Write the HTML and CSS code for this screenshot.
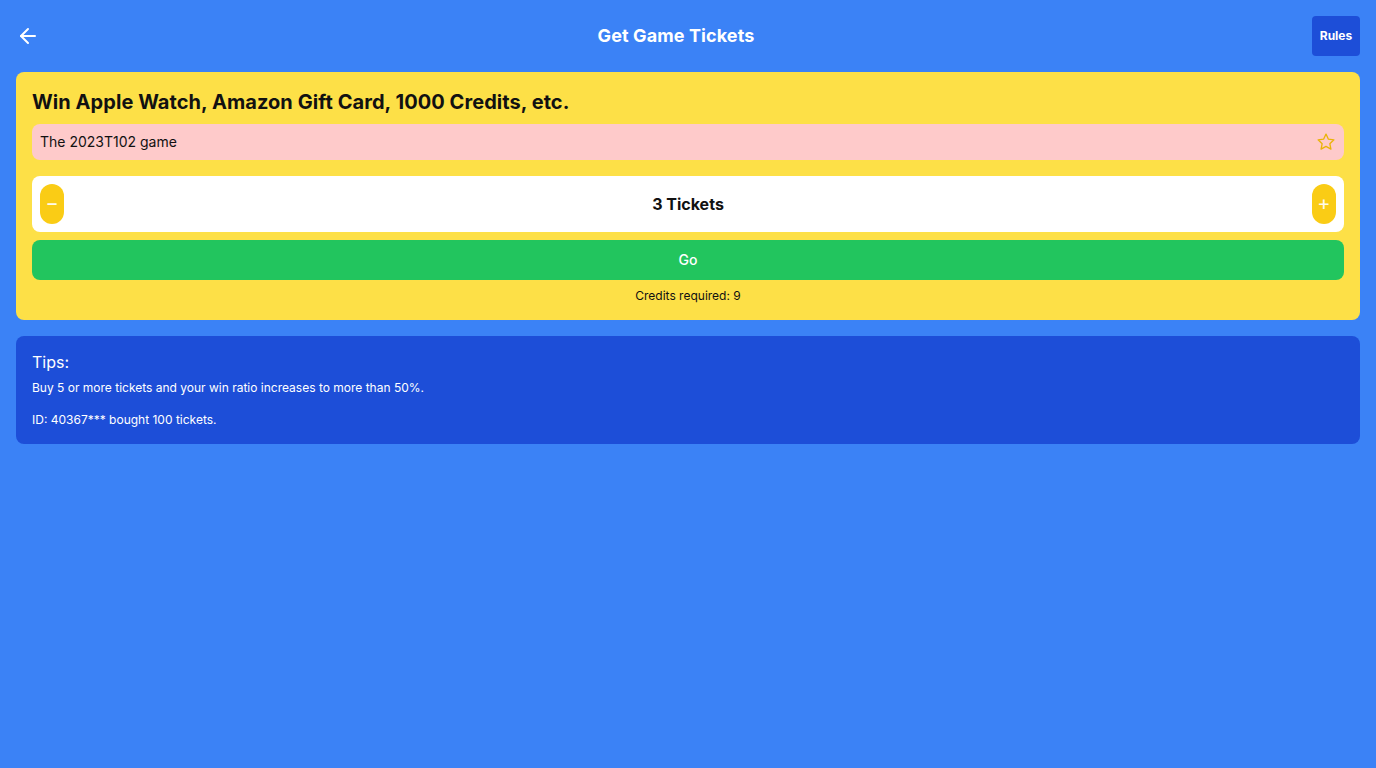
FILE: index.html
```html
<!DOCTYPE html>
<html>
<head>
<meta charset="utf-8">
<link rel="stylesheet" href="styles.css">
</head>
<body>
<header class="topbar">
  <button class="back" aria-label="Back">
    <svg width="24" height="24" viewBox="0 0 24 24" fill="none" stroke="#fff" stroke-width="2" stroke-linecap="round" stroke-linejoin="round"><path d="M19 12H5"/><path d="M12 19l-7-7 7-7"/></svg>
  </button>
  <h1 class="title">Get Game Tickets</h1>
  <button class="rules">Rules</button>
</header>
<main class="content">
  <section class="card">
    <h2 class="headline">Win Apple Watch, Amazon Gift Card, 1000 Credits, etc.</h2>
    <div class="game">
      <span>The 2023T102 game</span>
      <svg class="star" width="20" height="20" viewBox="0 0 24 24" fill="none" stroke="#eab308" stroke-width="1.6" stroke-linejoin="round"><path d="M12 2.5l2.9 6.1 6.6.8-4.9 4.6 1.3 6.6L12 17.3l-5.9 3.3 1.3-6.6-4.9-4.6 6.6-.8z"/></svg>
    </div>
    <div class="stepper">
      <button class="step">−</button>
      <span class="count">3 Tickets</span>
      <button class="step">+</button>
    </div>
    <button class="go">Go</button>
    <p class="credits">Credits required: 9</p>
  </section>
  <section class="tips">
    <h3 class="tips-title">Tips:</h3>
    <p class="tip">Buy 5 or more tickets and your win ratio increases to more than 50%.</p>
    <p class="tip tip-id">ID: 40367*** bought 100 tickets.</p>
  </section>
</main>
</body>
</html>
```
FILE: styles.css
```css
* { box-sizing: border-box; }
html, body { margin: 0; padding: 0; }
body {
  background: #3b82f6;
  font-family: Inter, "Noto Sans", sans-serif;
  color: #111;
  min-height: 768px;
}
button { font-family: inherit; border: none; cursor: pointer; }
.topbar {
  display: flex;
  align-items: center;
  justify-content: space-between;
  padding: 16px;
  height: 72px;
}
.back {
  background: transparent;
  padding: 0;
  width: 24px;
  height: 24px;
  display: flex;
}
.title {
  margin: 0;
  font-size: 18px;
  font-weight: 700;
  color: #fff;
  line-height: 28px;
  letter-spacing: 0.1px;
}
.rules {
  width: 48px;
  height: 40px;
  background: #1d4ed8;
  color: #fff;
  font-size: 12px;
  font-weight: 700;
  line-height: 16px;
  border-radius: 4px;
  padding: 0 0 1px;
}
.content {
  padding: 0 16px;
  display: flex;
  flex-direction: column;
  gap: 16px;
}
.card {
  background: #fde047;
  border-radius: 8px;
  padding: 16px;
  display: flex;
  flex-direction: column;
}
.headline {
  margin: 0;
  font-size: 20px;
  line-height: 28px;
  font-weight: 700;
  color: #111;
  letter-spacing: 0.06px;
}
.game {
  margin-top: 8px;
  background: #fecaca;
  border-radius: 8px;
  height: 36px;
  padding: 0 8px 1px;
  display: flex;
  align-items: center;
  justify-content: space-between;
  font-size: 14px;
}
.star { display: block; }
.stepper {
  margin-top: 16px;
  background: #fff;
  border-radius: 8px;
  padding: 8px;
  display: flex;
  align-items: center;
  justify-content: space-between;
}
.step {
  width: 24px;
  height: 40px;
  border-radius: 9999px;
  background: #facc15;
  color: #fffbeb;
  font-size: 20px;
  font-weight: 400;
  padding: 0 0 2px;
  line-height: 1;
}
.count {
  font-size: 16px;
  font-weight: 700;
}
.go {
  margin-top: 8px;
  height: 40px;
  background: #22c55e;
  color: #fff;
  font-size: 14px;
  font-weight: 500;
  line-height: 20px;
  padding: 0 0 1px;
  border-radius: 8px;
}
.credits {
  margin: 8px 0 0;
  text-align: center;
  font-size: 12px;
  line-height: 16px;
}
.tips {
  background: #1d4ed8;
  border-radius: 8px;
  padding: 16px;
  color: #fff;
}
.tips-title {
  margin: 0;
  font-size: 16px;
  font-weight: 400;
  line-height: 20px;
}
.tip {
  margin: 8px 0 0;
  font-size: 12px;
  line-height: 16px;
}
.tip-id { margin-top: 16px; }
```
